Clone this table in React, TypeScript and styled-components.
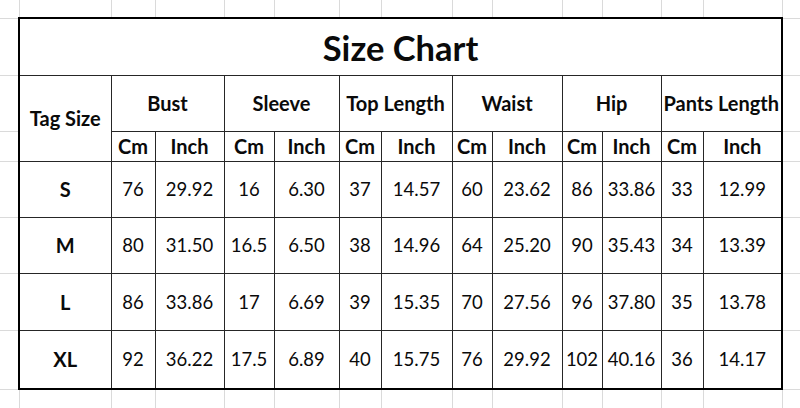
import React from 'react'
import styled, { createGlobalStyle, css } from 'styled-components'

const GlobalStyle = createGlobalStyle`
  html, body {
    margin: 0;
    padding: 0;
    background: #fff;
  }
  body {
    width: 800px;
    height: 408px;
    overflow: hidden;
    font-family: Lato, 'Noto Sans', sans-serif;
  }
`

// spreadsheet column widths, margin columns included
const COLS = [19, 92, 44, 69, 50, 65, 42, 71, 40, 70, 40, 59, 42, 79, 18]

const GROUPS = ['Bust', 'Sleeve', 'Top Length', 'Waist', 'Hip', 'Pants Length']

const SIZES = [
  { tag: 'S', h: 56, values: ['76', '29.92', '16', '6.30', '37', '14.57', '60', '23.62', '86', '33.86', '33', '12.99'] },
  { tag: 'M', h: 56, values: ['80', '31.50', '16.5', '6.50', '38', '14.96', '64', '25.20', '90', '35.43', '34', '13.39'] },
  { tag: 'L', h: 57, values: ['86', '33.86', '17', '6.69', '39', '15.35', '70', '27.56', '96', '37.80', '35', '13.78'] },
  { tag: 'XL', h: 59, values: ['92', '36.22', '17.5', '6.89', '40', '15.75', '76', '29.92', '102', '40.16', '36', '14.17'] },
]

const Sheet = styled.table`
  border-collapse: collapse;
  table-layout: fixed;
  width: 800px;
  color: #0a0a0a;
`

const Row = styled.tr<{ $h: number }>`
  height: ${({ $h }) => $h}px;
`

const GridCell = styled.td`
  padding: 0;
  border: none;
  border-right: 1px solid #dadada;
  border-bottom: 1px solid #dadada;
`

type EdgeProps = {
  $left?: boolean
  $right?: boolean
  $top?: boolean
  $bottom?: boolean
}

const frame = css<EdgeProps>`
  ${({ $left }) => $left && 'border-left: 2px solid #000;'}
  ${({ $right }) => $right && 'border-right: 2px solid #000;'}
  ${({ $top }) => $top && 'border-top: 2px solid #000;'}
  ${({ $bottom }) => $bottom && 'border-bottom: 2px solid #000;'}
`

const Cell = styled.td<EdgeProps>`
  padding: 0;
  border: 1px solid #262626;
  text-align: center;
  vertical-align: middle;
  white-space: nowrap;
  overflow: visible;
  ${frame}
`

const TitleCell = styled(Cell)`
  font-size: 34.5px;
  font-weight: 700;
  padding-top: 2px;
`

const HeadCell = styled(Cell)`
  font-size: 20px;
  font-weight: 700;
`

const ValueCell = styled(Cell)`
  font-size: 18.5px;
  font-weight: 400;
`

const Margin = ({ n = 1 }: { n?: number }) => (
  <>
    {Array.from({ length: n }).map((_, i) => (
      <GridCell key={i} />
    ))}
  </>
)

export default function App() {
  const last = SIZES.length - 1

  return (
    <>
      <GlobalStyle />
      <Sheet>
        <colgroup>
          {COLS.map((w, i) => (
            <col key={i} style={{ width: w }} />
          ))}
        </colgroup>
        <tbody>
          <Row $h={18}>
            <Margin n={15} />
          </Row>

          <Row $h={57}>
            <Margin />
            <TitleCell colSpan={13} $left $right $top>
              Size Chart
            </TitleCell>
            <Margin />
          </Row>

          <Row $h={56}>
            <Margin />
            <HeadCell rowSpan={2} $left>
              Tag Size
            </HeadCell>
            {GROUPS.map((g, i) => (
              <HeadCell key={g} colSpan={2} $right={i === GROUPS.length - 1}>
                {g}
              </HeadCell>
            ))}
            <Margin />
          </Row>

          <Row $h={30}>
            <Margin />
            {GROUPS.flatMap((g, i) => [
              <HeadCell key={g + 'cm'}>Cm</HeadCell>,
              <HeadCell key={g + 'in'} $right={i === GROUPS.length - 1}>
                Inch
              </HeadCell>,
            ])}
            <Margin />
          </Row>

          {SIZES.map((s, r) => (
            <Row key={s.tag} $h={s.h}>
              <Margin />
              <HeadCell $left $bottom={r === last}>
                {s.tag}
              </HeadCell>
              {s.values.map((v, i) => (
                <ValueCell key={i} $right={i === s.values.length - 1} $bottom={r === last}>
                  {v}
                </ValueCell>
              ))}
              <Margin />
            </Row>
          ))}

          <Row $h={19}>
            <Margin n={15} />
          </Row>
        </tbody>
      </Sheet>
    </>
  )
}
